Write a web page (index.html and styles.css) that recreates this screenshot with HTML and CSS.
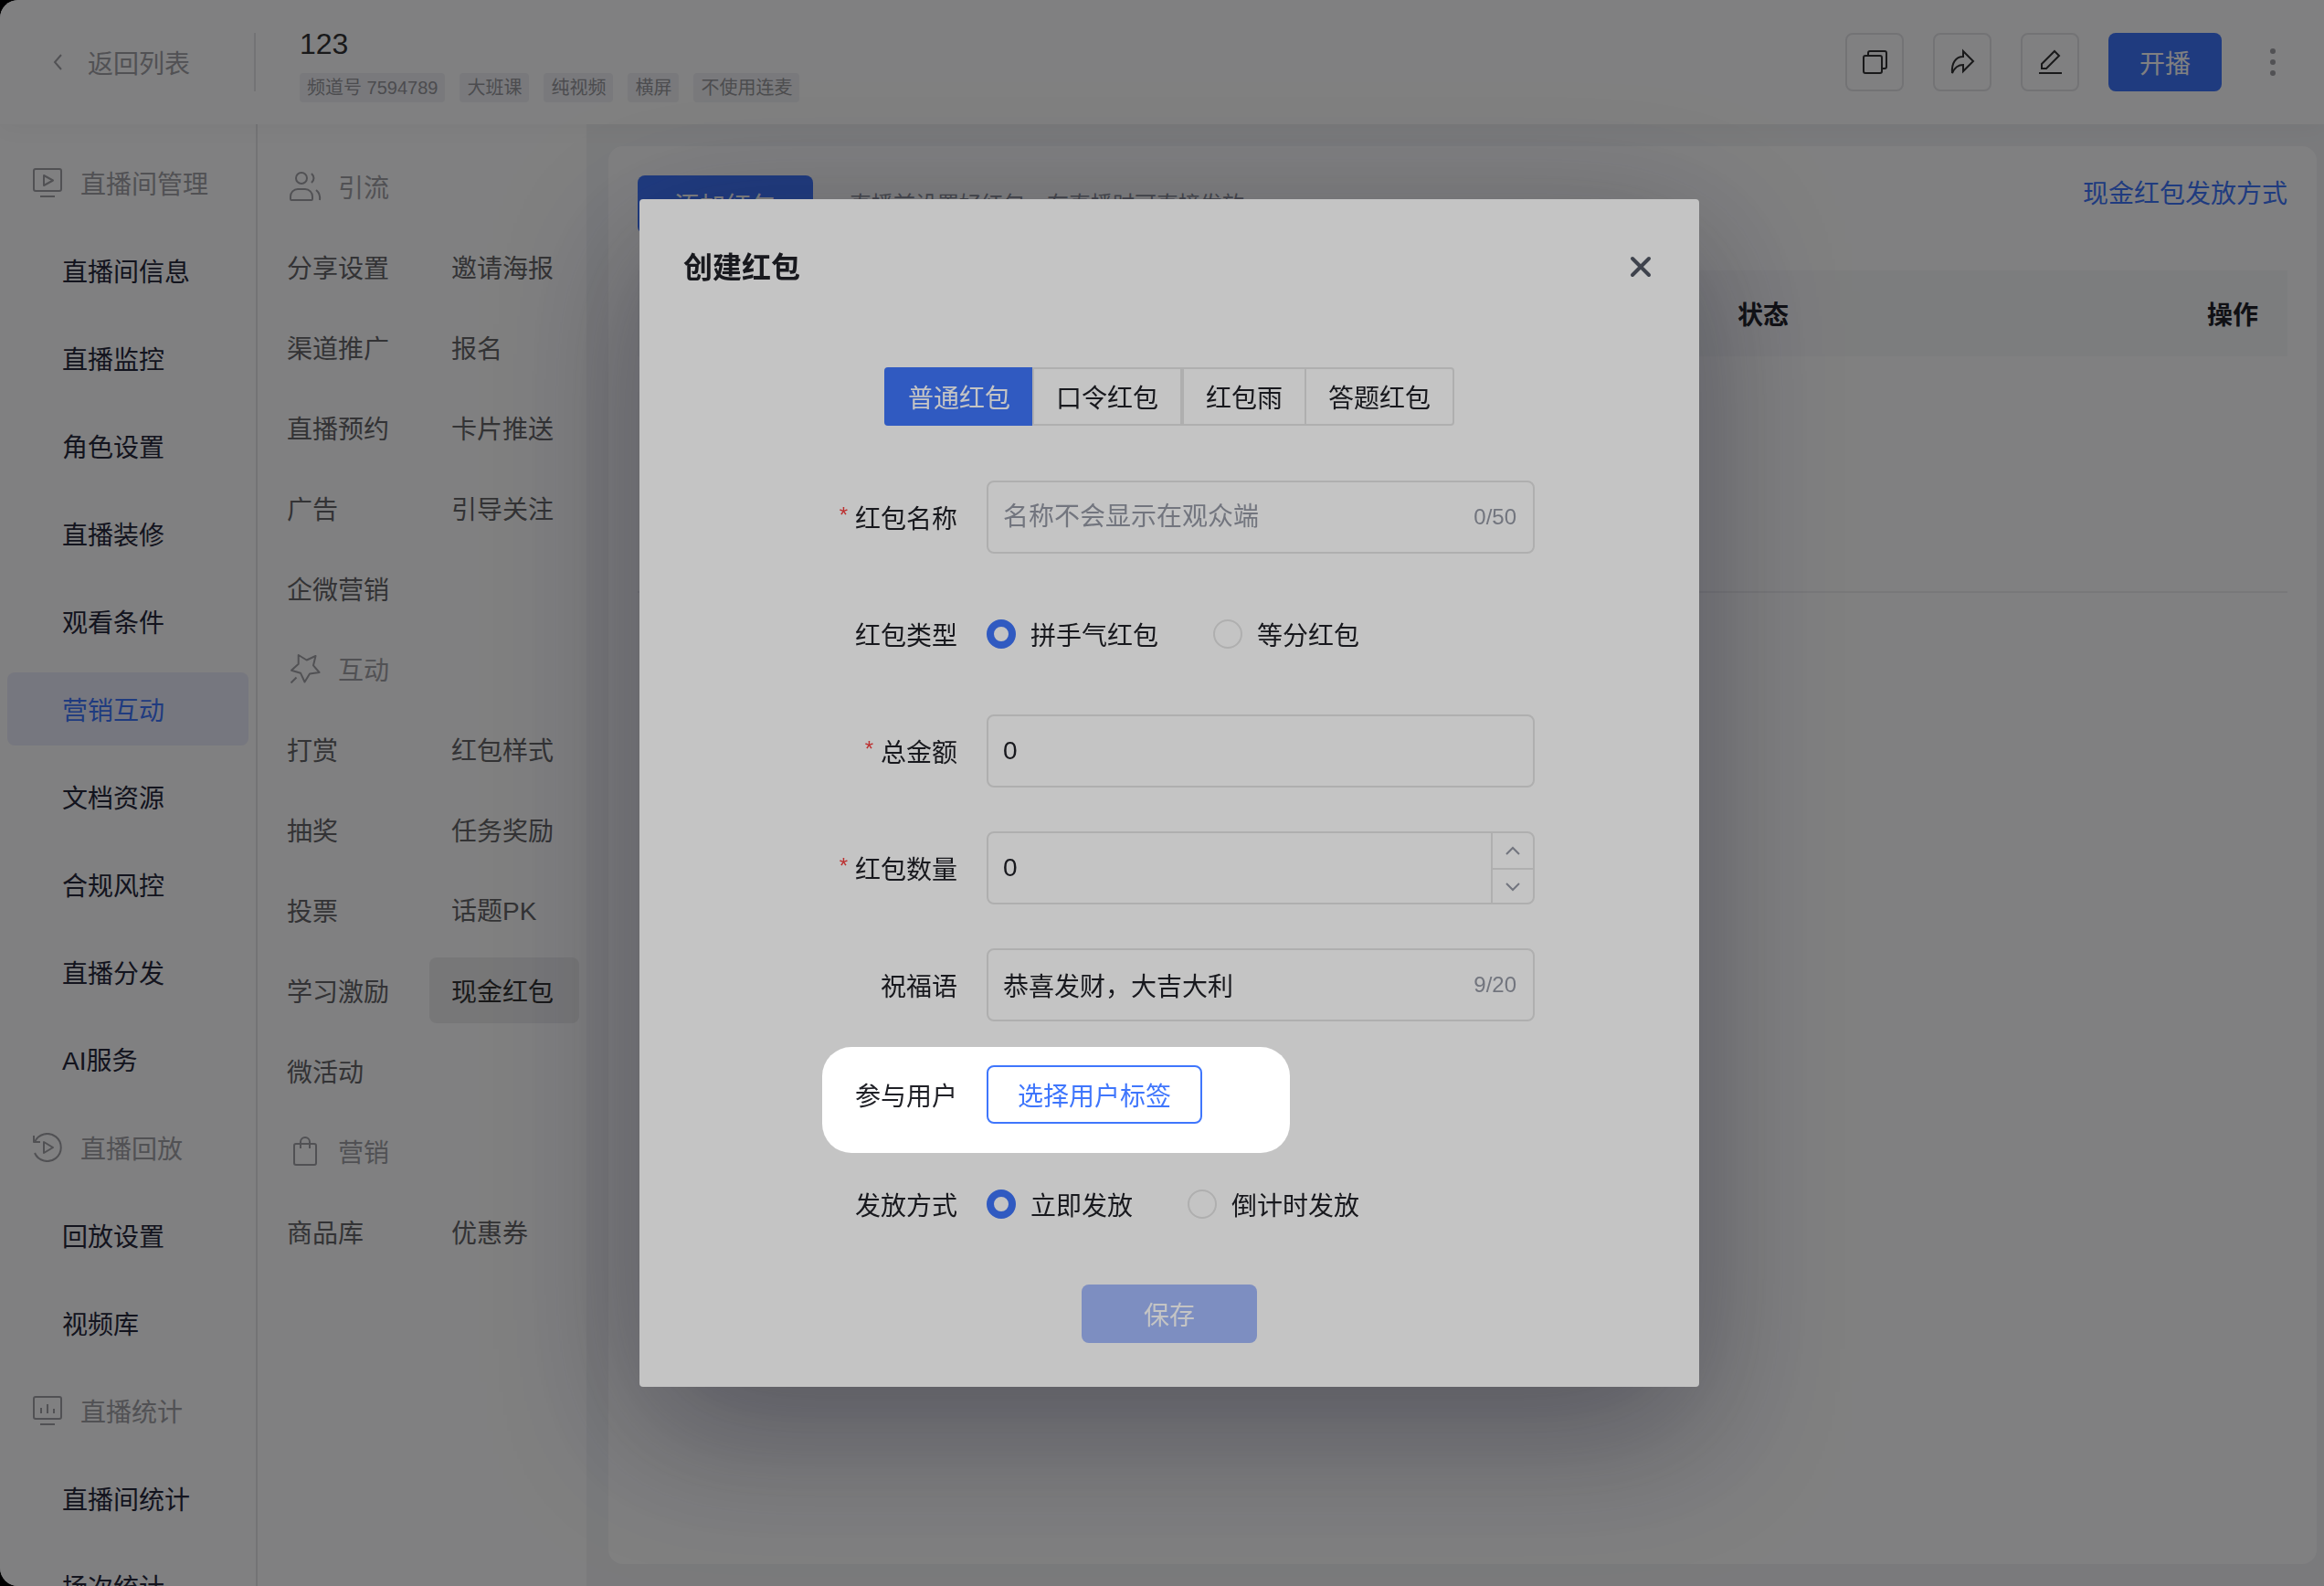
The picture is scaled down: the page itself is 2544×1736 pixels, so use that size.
FILE: index.html
```html
<!DOCTYPE html>
<html lang="zh-CN">
<head>
<meta charset="utf-8">
<title>现金红包</title>
<link rel="stylesheet" href="styles.css">
</head>
<body>
<div class="app">
  <header class="header">
    <a class="back" href="#">
      <svg class="back-icon" viewBox="0 0 16 20" fill="none" stroke="currentColor" stroke-width="2"><path d="M11 2 4 10l7 8"/></svg>
      返回列表
    </a>
    <div class="channel">
      <h1 class="channel-name">123</h1>
      <div class="tags">
        <span class="tag">频道号 7594789</span>
        <span class="tag">大班课</span>
        <span class="tag">纯视频</span>
        <span class="tag">横屏</span>
        <span class="tag">不使用连麦</span>
      </div>
    </div>
    <div class="actions">
      <button class="icon-btn" aria-label="复制"><svg viewBox="0 0 32 32"><rect x="4" y="9" width="20" height="19" rx="2"/><path d="M9 9V6a2 2 0 0 1 2-2h16a2 2 0 0 1 2 2v15a2 2 0 0 1-2 2h-3"/></svg></button>
      <button class="icon-btn" aria-label="分享"><svg viewBox="0 0 32 32"><path d="M17 4 28 15 17 26V19C12 19 8 21 5 28 4 17 9 10 17 10Z"/></svg></button>
      <button class="icon-btn" aria-label="编辑"><svg viewBox="0 0 32 32"><path d="M21 4l5 5-14 14H7v-5ZM4 28h25"/></svg></button>
      <button class="btn btn-live">开播</button>
      <button class="more-btn" aria-label="更多"><svg viewBox="0 0 6 30" fill="currentColor"><circle cx="3" cy="3" r="3"/><circle cx="3" cy="15" r="3"/><circle cx="3" cy="27" r="3"/></svg></button>
    </div>
  </header>

  <div class="body">
    <nav class="sidebar">
      <div class="side-title">
        <svg viewBox="0 0 32 32"><rect x="1" y="1" width="30" height="24" rx="2"/><path d="M12 8v11l10-5.500ZM8 31h16"/></svg>
        直播间管理
      </div>
      <a class="side-item" href="#">直播间信息</a>
      <a class="side-item" href="#">直播监控</a>
      <a class="side-item" href="#">角色设置</a>
      <a class="side-item" href="#">直播装修</a>
      <a class="side-item" href="#">观看条件</a>
      <a class="side-item active" href="#">营销互动</a>
      <a class="side-item" href="#">文档资源</a>
      <a class="side-item" href="#">合规风控</a>
      <a class="side-item" href="#">直播分发</a>
      <a class="side-item mixed" href="#">AI服务</a>
      <div class="side-title">
        <svg viewBox="0 0 32 32"><path d="M2 10A15 15 0 1 1 2 22M1 3v7h7M12 10v12l10-6Z"/></svg>
        直播回放
      </div>
      <a class="side-item" href="#">回放设置</a>
      <a class="side-item" href="#">视频库</a>
      <div class="side-title">
        <svg viewBox="0 0 32 32"><rect x="1" y="1" width="30" height="24" rx="2"/><path d="M9 13v6M16 9v10M23 14v5M8 31h16"/></svg>
        直播统计
      </div>
      <a class="side-item" href="#">直播间统计</a>
      <a class="side-item" href="#">场次统计</a>
    </nav>

    <nav class="submenu">
      <div class="sub-title">
        <svg viewBox="0 0 40 32"><circle cx="16" cy="7" r="6"/><path d="M27 2q5 5 0 10M4 27a8 8 0 0 1 8-8h8a8 8 0 0 1 8 8v3a1 1 0 0 1-1 1H5a1 1 0 0 1-1-1ZM32 20q5 4 4 11"/></svg>
        引流
      </div>
      <a class="sub-item" href="#">分享设置</a>
      <a class="sub-item" href="#">邀请海报</a>
      <a class="sub-item" href="#">渠道推广</a>
      <a class="sub-item" href="#">报名</a>
      <a class="sub-item" href="#">直播预约</a>
      <a class="sub-item" href="#">卡片推送</a>
      <a class="sub-item" href="#">广告</a>
      <a class="sub-item" href="#">引导关注</a>
      <a class="sub-item" href="#">企微营销</a>
      <div class="sub-title">
        <svg viewBox="0 0 40 32"><path d="M12.700 1 21.700 6.500 31.500 2 29 12.300 35.500 20 25 21.500 19.500 30.500 15 20.700 5 17.700 12.700 10.700ZM10.500 25.500 4.500 31.500"/></svg>
        互动
      </div>
      <a class="sub-item" href="#">打赏</a>
      <a class="sub-item" href="#">红包样式</a>
      <a class="sub-item" href="#">抽奖</a>
      <a class="sub-item" href="#">任务奖励</a>
      <a class="sub-item" href="#">投票</a>
      <a class="sub-item mixed" href="#">话题PK</a>
      <a class="sub-item" href="#">学习激励</a>
      <a class="sub-item active" href="#">现金红包</a>
      <a class="sub-item" href="#">微活动</a>
      <div class="sub-title">
        <svg viewBox="0 0 40 32"><rect x="8" y="8" width="24" height="23" rx="2"/><path d="M15 13V6a5 5 0 0 1 10 0v7"/></svg>
        营销
      </div>
      <a class="sub-item" href="#">商品库</a>
      <a class="sub-item" href="#">优惠券</a>
    </nav>

    <main class="main">
      <section class="card">
        <div class="toolbar">
          <button class="btn btn-add">添加红包</button>
          <p class="hint">直播前设置好红包，在直播时可直接发放</p>
          <a class="help-link" href="#">现金红包发放方式</a>
        </div>
        <table class="table">
          <colgroup><col><col class="col-status"><col class="col-action"></colgroup>
          <thead><tr><td></td><th>状态</th><th class="cell-end">操作</th></tr></thead>
          <tbody><tr><td colspan="3"></td></tr></tbody>
        </table>
      </section>
    </main>
  </div>
</div>

<div class="mask">
  <form class="modal" role="dialog" aria-labelledby="modal-title">
    <div class="modal-head">
      <h2 class="modal-title" id="modal-title">创建红包</h2>
      <button type="button" class="close" aria-label="关闭"><svg viewBox="0 0 24 24" fill="none" stroke="currentColor" stroke-width="4" stroke-linecap="round"><path d="M3 3l18 18M21 3 3 21"/></svg></button>
    </div>
    <div class="tabs">
      <button type="button" class="tab active">普通红包</button>
      <button type="button" class="tab">口令红包</button>
      <button type="button" class="tab">红包雨</button>
      <button type="button" class="tab">答题红包</button>
    </div>
    <div class="fields">
      <div class="row">
        <label class="label required" for="name">红包名称</label>
        <div class="field"><input id="name" class="input" type="text" placeholder="名称不会显示在观众端"><span class="count">0/50</span></div>
      </div>
      <div class="row" role="radiogroup" aria-labelledby="type-label">
        <span class="label" id="type-label">红包类型</span>
        <div class="radios">
          <label class="radio"><input type="radio" name="type" checked>拼手气红包</label>
          <label class="radio"><input type="radio" name="type">等分红包</label>
        </div>
      </div>
      <div class="row">
        <label class="label required" for="amount">总金额</label>
        <div class="field"><input id="amount" class="input" type="text" value="0"></div>
      </div>
      <div class="row">
        <label class="label required" for="quantity">红包数量</label>
        <div class="field">
          <input id="quantity" class="input" type="text" value="0">
          <div class="stepper">
            <button type="button" class="step" aria-label="增加"><svg viewBox="0 0 16 10"><path d="M1 9l7-7 7 7"/></svg></button>
            <button type="button" class="step" aria-label="减少"><svg viewBox="0 0 16 10"><path d="M1 1l7 7 7-7"/></svg></button>
          </div>
        </div>
      </div>
      <div class="row">
        <label class="label" for="wish">祝福语</label>
        <div class="field"><input id="wish" class="input" type="text" value="恭喜发财，大吉大利"><span class="count">9/20</span></div>
      </div>
      <div class="row row-guide">
        <label class="label" for="pick">参与用户</label>
        <div><button type="button" id="pick" class="btn btn-outline">选择用户标签</button></div>
        <div class="spotlight"></div>
      </div>
      <div class="row" role="radiogroup" aria-labelledby="send-label">
        <span class="label" id="send-label">发放方式</span>
        <div class="radios">
          <label class="radio"><input type="radio" name="send" checked>立即发放</label>
          <label class="radio"><input type="radio" name="send">倒计时发放</label>
        </div>
      </div>
    </div>
    <div class="modal-foot"><button type="submit" class="btn btn-save" disabled>保存</button></div>
  </form>
</div>
</body>
</html>
```
FILE: styles.css
```css
* {
  box-sizing: border-box;
}

:root {
  --blue: #3f76fc;
  --text: #202127;
  --nav: #26283a;
  --muted: #a2a2a6;
  --line: #e4e4e4;
  --latin: "Liberation Sans", "Noto Sans CJK SC", sans-serif;
}

body {
  margin: 0;
  background: #000;
  color: var(--text);
  font: 28px/40px "Noto Sans CJK SC", "Liberation Sans", sans-serif;
}

h1, h2, p {
  margin: 0;
}

a {
  color: inherit;
  text-decoration: none;
}

button, input {
  margin: 0;
  font: inherit;
  color: inherit;
}

button {
  padding: 0;
  border: 0;
  background: none;
}

svg {
  display: block;
}

.app {
  display: flex;
  flex-direction: column;
  height: 100vh;
  overflow: hidden;
  background: #f3f4f6;
  border-radius: 20px 0 0 20px;
}

/* Header */
.header {
  position: relative;
  display: flex;
  align-items: center;
  flex: none;
  height: 136px;
  padding-right: 32px;
  background: #fff;
  box-shadow: 0 4px 24px rgba(0, 0, 0, .04);
}

.back {
  display: flex;
  align-items: center;
  gap: 24px;
  width: 280px;
  height: 64px;
  padding-left: 56px;
  border-right: 2px solid #e6e6e8;
  color: var(--muted);
}

.back-icon {
  width: 16px;
  height: 20px;
}

.channel {
  display: flex;
  flex-direction: column;
  gap: 8px;
  margin-left: 48px;
  font-family: var(--latin);
}

.channel-name {
  font-size: 32px;
  line-height: 48px;
  font-weight: 400;
  color: #333;
}

.tags {
  display: flex;
  gap: 16px;
}

.tag {
  padding: 0 8px;
  border-radius: 4px;
  background: #f1f2f6;
  color: #98989c;
  font-size: 20px;
  line-height: 32px;
}

.actions {
  display: flex;
  align-items: center;
  gap: 32px;
  margin-left: auto;
}

.icon-btn {
  display: grid;
  place-items: center;
  width: 64px;
  height: 64px;
  border: 2px solid #e6e6e8;
  border-radius: 8px;
}

.icon-btn svg {
  width: 32px;
  height: 32px;
  fill: none;
  stroke: #333;
  stroke-width: 2;
}

.btn {
  height: 64px;
  border-radius: 8px;
  background: var(--blue);
  color: #fff;
}

.btn-live {
  width: 124px;
}

.more-btn {
  display: grid;
  place-items: center;
  width: 48px;
  height: 64px;
  color: var(--muted);
}

.more-btn svg {
  width: 6px;
  height: 30px;
}

/* Navigation */
.body {
  display: flex;
  flex: 1;
  min-height: 0;
}

.sidebar {
  flex: none;
  width: 282px;
  padding: 16px 8px 0;
  border-right: 2px solid #e6e6e8;
  background: #fff;
  overflow: hidden;
}

.side-title, .side-item {
  display: flex;
  align-items: center;
  height: 80px;
  margin: 8px 0 16px;
  border-radius: 8px;
}

.side-title {
  gap: 20px;
  padding-left: 28px;
  color: var(--muted);
}

.side-title svg {
  width: 32px;
  height: 32px;
}

.side-title svg, .sub-title svg {
  fill: none;
  stroke: currentColor;
  stroke-width: 2;
  stroke-linejoin: round;
}

.side-item {
  padding-left: 60px;
  color: var(--nav);
}

.side-item.active {
  background: #ecedfc;
  color: var(--blue);
}

.submenu {
  display: grid;
  grid-template-columns: 164px 164px;
  grid-auto-rows: 72px;
  gap: 16px;
  flex: none;
  width: 360px;
  padding: 32px 8px 0;
  background: #fff;
}

.sub-title {
  display: flex;
  align-items: center;
  gap: 16px;
  grid-column: 1 / -1;
  padding-left: 24px;
  color: var(--muted);
}

.sub-title svg {
  width: 40px;
  height: 32px;
}

.sub-item {
  display: flex;
  align-items: center;
  padding-left: 24px;
  border-radius: 8px;
  color: #666668;
}

.sub-item.active {
  background: #ededee;
  color: #333;
}

.mixed {
  padding-top: 4px;
  font-family: var(--latin);
}

/* Content */
.main {
  flex: 1;
  padding: 24px 8px 24px 24px;
}

.card {
  height: 100%;
  padding: 32px;
  border-radius: 16px;
  background: #fff;
}

.toolbar {
  display: flex;
  align-items: center;
  margin-bottom: 40px;
}

.btn-add {
  width: 192px;
}

.hint {
  margin-left: 40px;
  color: #8a8d98;
  font-family: var(--latin);
  font-size: 24px;
}

.help-link {
  align-self: flex-start;
  margin-left: auto;
  color: var(--blue);
  line-height: 36px;
}

.table {
  width: 100%;
  border-collapse: collapse;
  table-layout: fixed;
}

.col-status, .col-action {
  width: 317px;
}

.table th, .table td {
  height: 94px;
  padding: 0 32px;
  text-align: left;
}

.table thead {
  background: #f8f9fa;
}

.table .cell-end {
  text-align: right;
}

.table tbody td {
  height: 258px;
  border-bottom: 2px solid #f0f0f2;
}

/* Dialog */
.mask {
  position: fixed;
  inset: 0;
  display: grid;
  place-items: center;
  padding-left: 16px;
  overflow: hidden;
  background: rgba(3, 4, 6, .35);
}

.modal {
  width: 1160px;
  padding: 48px 0;
  border-radius: 4px;
  background: #fff;
  box-shadow: 0 48px 160px rgba(36, 36, 60, .43);
}

.modal-head {
  display: flex;
  align-items: center;
  justify-content: space-between;
  padding: 0 48px;
}

.modal-title {
  font-size: 32px;
  line-height: 48px;
}

.close {
  display: grid;
  place-items: center;
  width: 32px;
  height: 48px;
  padding-top: 4px;
  color: #535865;
}

.close svg {
  width: 24px;
  height: 24px;
}

.tabs {
  display: flex;
  justify-content: center;
  margin: 88px 0 60px;
}

.tab {
  height: 64px;
  padding: 0 24px;
  border: 2px solid var(--line);
  border-right-width: 0;
}

.tab:nth-child(even) {
  border-right-width: 2px;
}

.tab:first-child {
  border-radius: 4px 0 0 4px;
}

.tab:last-child {
  border-radius: 0 4px 4px 0;
}

.tab.active {
  border-color: var(--blue);
  background: var(--blue);
  color: #fff;
}

.fields {
  display: grid;
  gap: 48px;
}

.row {
  display: grid;
  grid-template-columns: 380px 600px;
  align-items: center;
  min-height: 80px;
}

.row-guide {
  position: relative;
  z-index: 1;
  min-height: 64px;
}

.label {
  padding-right: 32px;
  text-align: right;
}

.required::before {
  content: "*";
  margin-right: 8px;
  color: #f53f3f;
  font-family: var(--latin);
  font-size: 24px;
  line-height: 24px;
  vertical-align: 6px;
}

.field {
  display: flex;
  align-items: center;
  height: 80px;
  border: 2px solid var(--line);
  border-radius: 8px;
}

.input {
  flex: 1;
  min-width: 0;
  height: 100%;
  padding: 0 16px;
  border: 0;
  outline: 0;
  background: none;
  font-family: var(--latin);
}

.input::placeholder {
  color: #9599a5;
  opacity: 1;
}

.count {
  padding-right: 18px;
  color: #9599a5;
  font-family: var(--latin);
  font-size: 24px;
}

.stepper {
  display: grid;
  grid-template-rows: 1fr 1fr;
  width: 46px;
  height: 100%;
  border-left: 2px solid var(--line);
}

.step {
  display: grid;
  place-items: center;
}

.step + .step {
  padding-top: 2px;
  border-top: 2px solid var(--line);
}

.step svg {
  width: 16px;
  height: 10px;
  fill: none;
  stroke: #9599a5;
  stroke-width: 2;
}

.radios {
  display: flex;
  gap: 60px;
}

.radio {
  display: flex;
  align-items: center;
  gap: 16px;
}

.radio input {
  appearance: none;
  width: 32px;
  height: 32px;
  border: 2px solid var(--line);
  border-radius: 50%;
}

.radio input:checked {
  border: 8px solid var(--blue);
}

.btn-outline {
  padding: 0 32px;
  border: 2px solid var(--blue);
  background: #fff;
  color: var(--blue);
}

/* Guide highlight: dims everything outside its own box */
.spotlight {
  position: absolute;
  top: -20px;
  left: 200px;
  width: 512px;
  height: 116px;
  border-radius: 32px;
  box-shadow: 0 0 0 9999px rgba(0, 0, 0, .23);
  pointer-events: none;
}

.modal-foot {
  display: flex;
  justify-content: center;
  margin-top: 48px;
}

.btn-save {
  width: 192px;
  background: #a3b9fb;
}
```
